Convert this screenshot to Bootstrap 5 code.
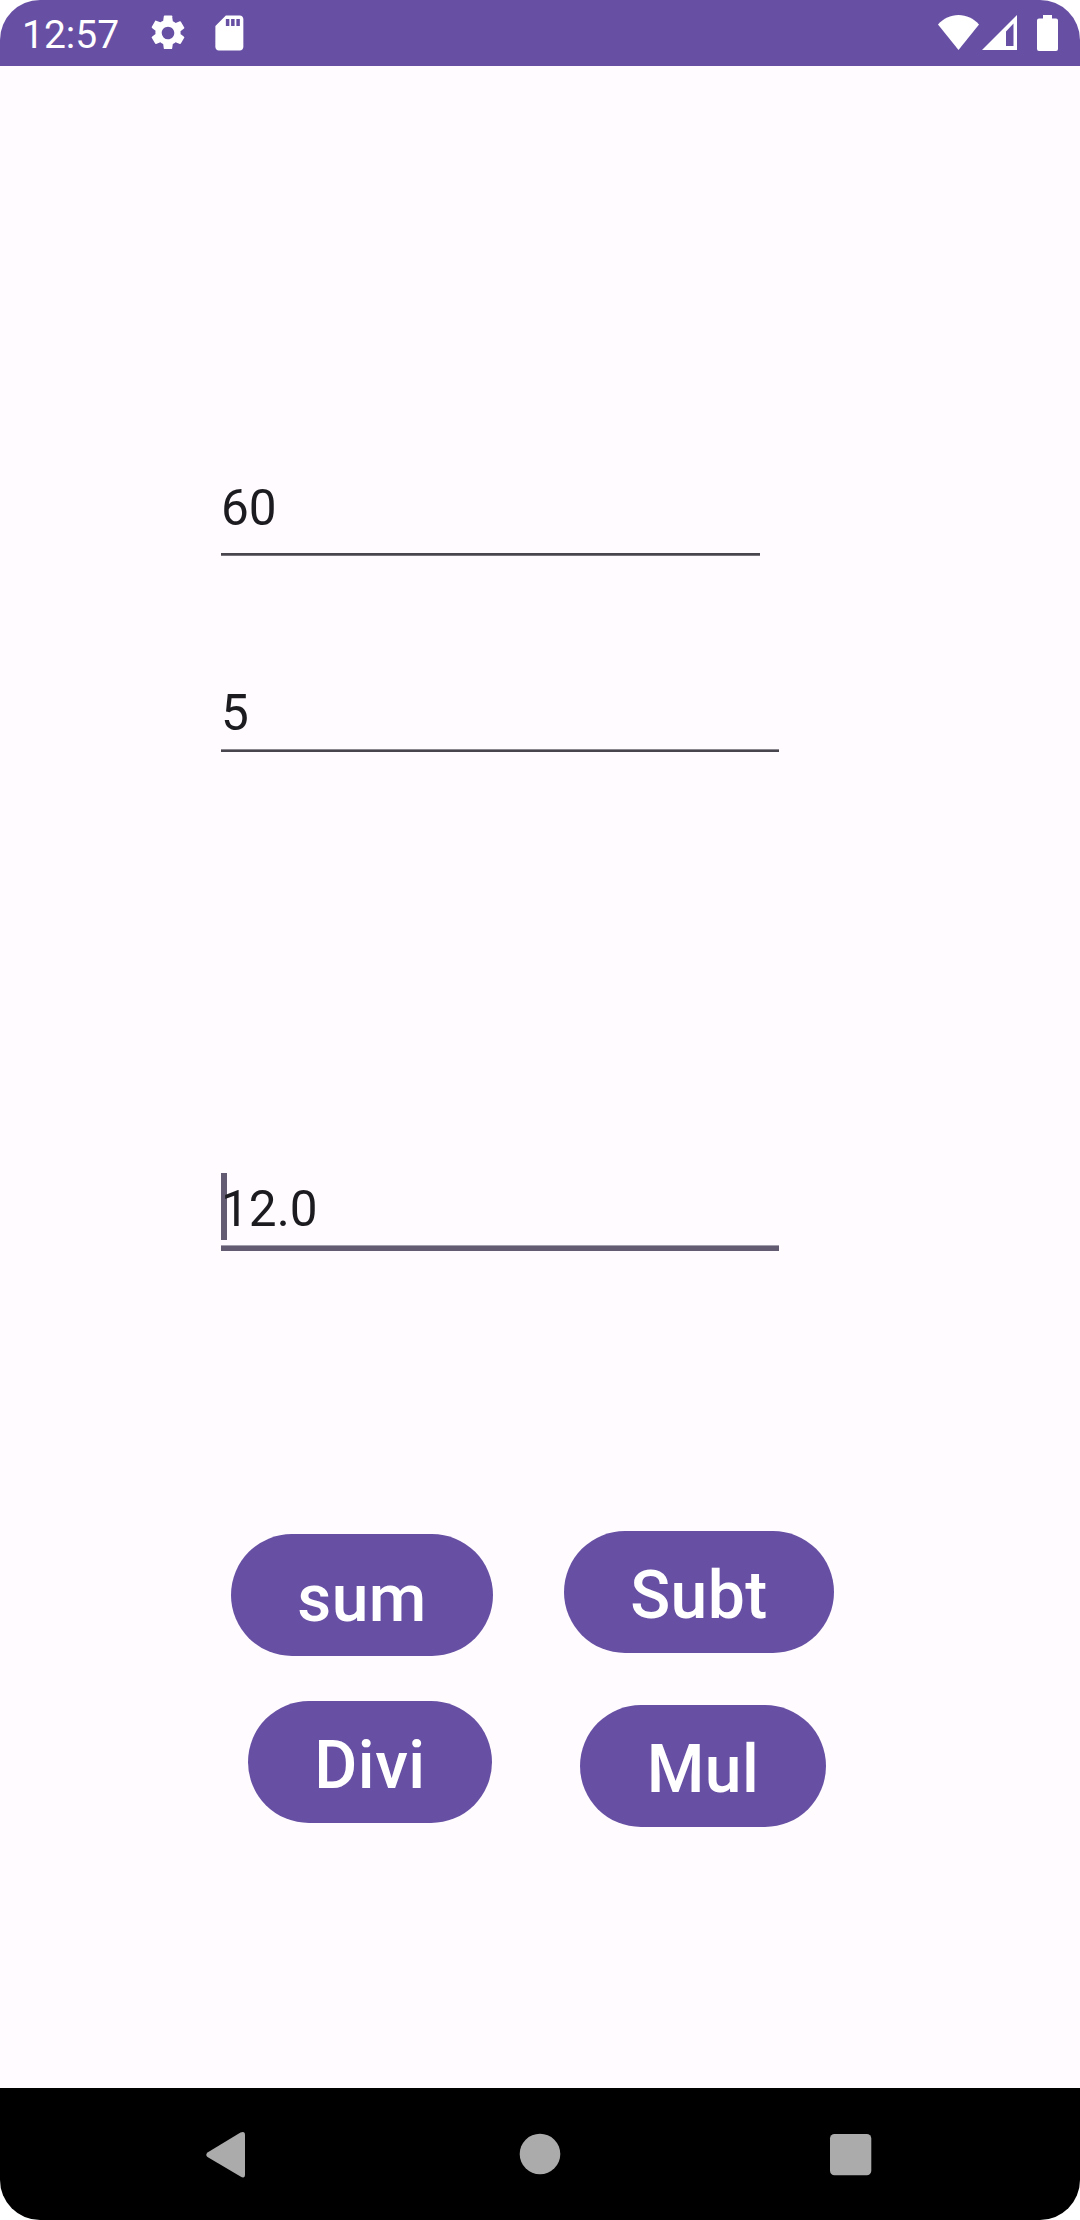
<!DOCTYPE html>
<html lang="en">
<head>
<meta charset="utf-8">
<meta name="viewport" content="width=device-width, initial-scale=1">
<title>Calculator</title>
<link href="https://cdn.jsdelivr.net/npm/bootstrap@5.3.0/dist/css/bootstrap.min.css" rel="stylesheet">
<style>
  body { background: #fff; font-family: Roboto, "Liberation Sans", sans-serif; }
  .phone { width: 1080px; height: 2220px; background: #fffbfe; border-radius: 40px; }
  .status-bar { height: 66px; background: #6750a4; color: #fff; padding: 0 22px; }
  .clock { font-size: 39px; line-height: 46px; width: 125px; padding-top: 3px; }
  .status-bar svg { display: block; fill: #fff; }
  .entry { margin-left: 221px; font-size: 49.5px; line-height: 58px; color: #1c1b1f; }
  .entry-line { height: 3px; background: #49454f; }
  .entry-a { width: 539px; margin-top: 413px; }
  .entry-a span { padding-bottom: 16px; }
  .entry-a .entry-line { border-bottom: 1px solid #77737b; }
  .entry-b { width: 558px; margin-top: 128px; }
  .entry-b span { padding-bottom: 7px; }
  .entry-b .entry-line { border-top: 1px solid #8a878e; }
  .entry-c { width: 558px; margin-top: 428px; }
  .entry-c span { padding-bottom: 7px; z-index: 1; }
  .entry-c .entry-line { height: 6px; background: #625b71; border-top: 1px solid #a39eac; }
  .caret { left: 0; top: -7px; width: 6px; height: 67px; background: #625b71; z-index: 0; }
  .keys { margin: 280px 0 0 231px; gap: 71px; }
  .btn-key { --bs-btn-color: #fff; --bs-btn-bg: #6750a4; --bs-btn-hover-color: #fff; --bs-btn-hover-bg: #5b4592;
    --bs-btn-border-width: 0; --bs-btn-font-weight: 500; --bs-btn-font-size: 66px; --bs-btn-line-height: 77px;
    height: 122px; padding: 26px 0 19px; letter-spacing: .47px; }
  .key-sum { width: 262px; margin-top: 3px; }
  .key-divi { width: 244px; margin: 45px 1px 0 0; }
  .key-subt { width: 270px; }
  .key-mul { width: 246px; margin: 52px 0 0 16px; }
  .nav-keys { height: 132px; background: #000; }
  .nav-keys svg { display: block; }
</style>
</head>
<body>
<div class="phone d-flex flex-column overflow-hidden">
  <header class="status-bar d-flex align-items-center flex-shrink-0">
    <span class="clock">12:57</span>
    <svg width="42" height="42" viewBox="0 0 24 24" aria-hidden="true"><path d="M19.14 12.94c.04-.3.06-.61.06-.94 0-.32-.02-.64-.07-.94l2.03-1.58a.49.49 0 0 0 .12-.61l-1.92-3.32a.488.488 0 0 0-.59-.22l-2.39.96c-.5-.38-1.03-.7-1.62-.94l-.36-2.54A.484.484 0 0 0 13.92 2h-3.84c-.24 0-.43.17-.47.41l-.36 2.54c-.59.24-1.13.57-1.62.94l-2.39-.96c-.22-.08-.47 0-.59.22L2.74 8.47c-.12.21-.08.47.12.61l2.03 1.58c-.05.3-.09.63-.09.94s.02.64.07.94l-2.03 1.58a.49.49 0 0 0-.12.61l1.92 3.32c.12.22.37.29.59.22l2.39-.96c.5.38 1.03.7 1.62.94l.36 2.54c.05.24.24.41.48.41h3.84c.24 0 .44-.17.47-.41l.36-2.54c.59-.24 1.13-.56 1.62-.94l2.39.96c.22.08.47 0 .59-.22l1.92-3.32c.12-.22.07-.47-.12-.61l-2.01-1.58zM12 15.6A3.61 3.61 0 0 1 8.4 12c0-1.98 1.62-3.6 3.6-3.6s3.6 1.62 3.6 3.6-1.62 3.6-3.6 3.6z"/></svg>
    <svg class="ms-3 me-auto" width="48" height="42" viewBox="-1.9 0 27.4 24" aria-hidden="true"><path d="M18 2h-8L4.02 8 4 20c0 1.100.9 2 2 2h12c1.100 0 2-.9 2-2V4c0-1.100-.9-2-2-2zm-6 6h-2V4h2v4zm3 0h-2V4h2v4zm3 0h-2V4h2v4z"/></svg>
    <svg width="122" height="66" viewBox="936 0 122 66" aria-hidden="true">
      <path d="M958.5 50 938 24.500C943.500 18.500 950.500 15 958.500 15S973.500 18.500 979 24.500Z"/>
      <path fill-rule="evenodd" d="M982 50 1017 15V50ZM1006 46H1013.500V23.500L1006 31.500Z"/>
      <path d="M1043 18.500V15H1052V18.500H1056A2 2 0 0 1 1058 20.500V49A2 2 0 0 1 1056 51H1039A2 2 0 0 1 1037 49V20.500A2 2 0 0 1 1039 18.500Z"/>
    </svg>
  </header>

  <main class="flex-grow-1">
    <div class="entry entry-a" role="textbox"><span class="d-block">60</span><div class="entry-line"></div></div>
    <div class="entry entry-b" role="textbox"><span class="d-block">5</span><div class="entry-line"></div></div>
    <div class="entry entry-c position-relative" role="textbox">
      <i class="caret position-absolute"></i>
      <span class="d-block position-relative">12.0</span><div class="entry-line"></div>
    </div>
    <div class="keys d-flex align-items-start">
      <div class="d-flex flex-column align-items-end">
        <button type="button" class="btn btn-key rounded-pill key-sum">sum</button>
        <button type="button" class="btn btn-key rounded-pill key-divi">Divi</button>
      </div>
      <div class="d-flex flex-column align-items-start">
        <button type="button" class="btn btn-key rounded-pill key-subt">Subt</button>
        <button type="button" class="btn btn-key rounded-pill key-mul">Mul</button>
      </div>
    </div>
  </main>

  <nav class="nav-keys flex-shrink-0">
    <svg width="1080" height="132" viewBox="0 0 1080 132" fill="#ababab" aria-hidden="true">
      <path d="M207.500 64.500 240.500 44.500Q245 42.500 245 47V86.500Q245 91 240.500 88.500L207.500 69Q205 66.800 207.500 64.500Z"/>
      <circle cx="540" cy="66" r="20.300"/>
      <rect x="830" y="46" width="41.300" height="41.300" rx="4.500"/>
    </svg>
  </nav>
</div>
<script src="https://cdn.jsdelivr.net/npm/bootstrap@5.3.0/dist/js/bootstrap.bundle.min.js"></script>
</body>
</html>
